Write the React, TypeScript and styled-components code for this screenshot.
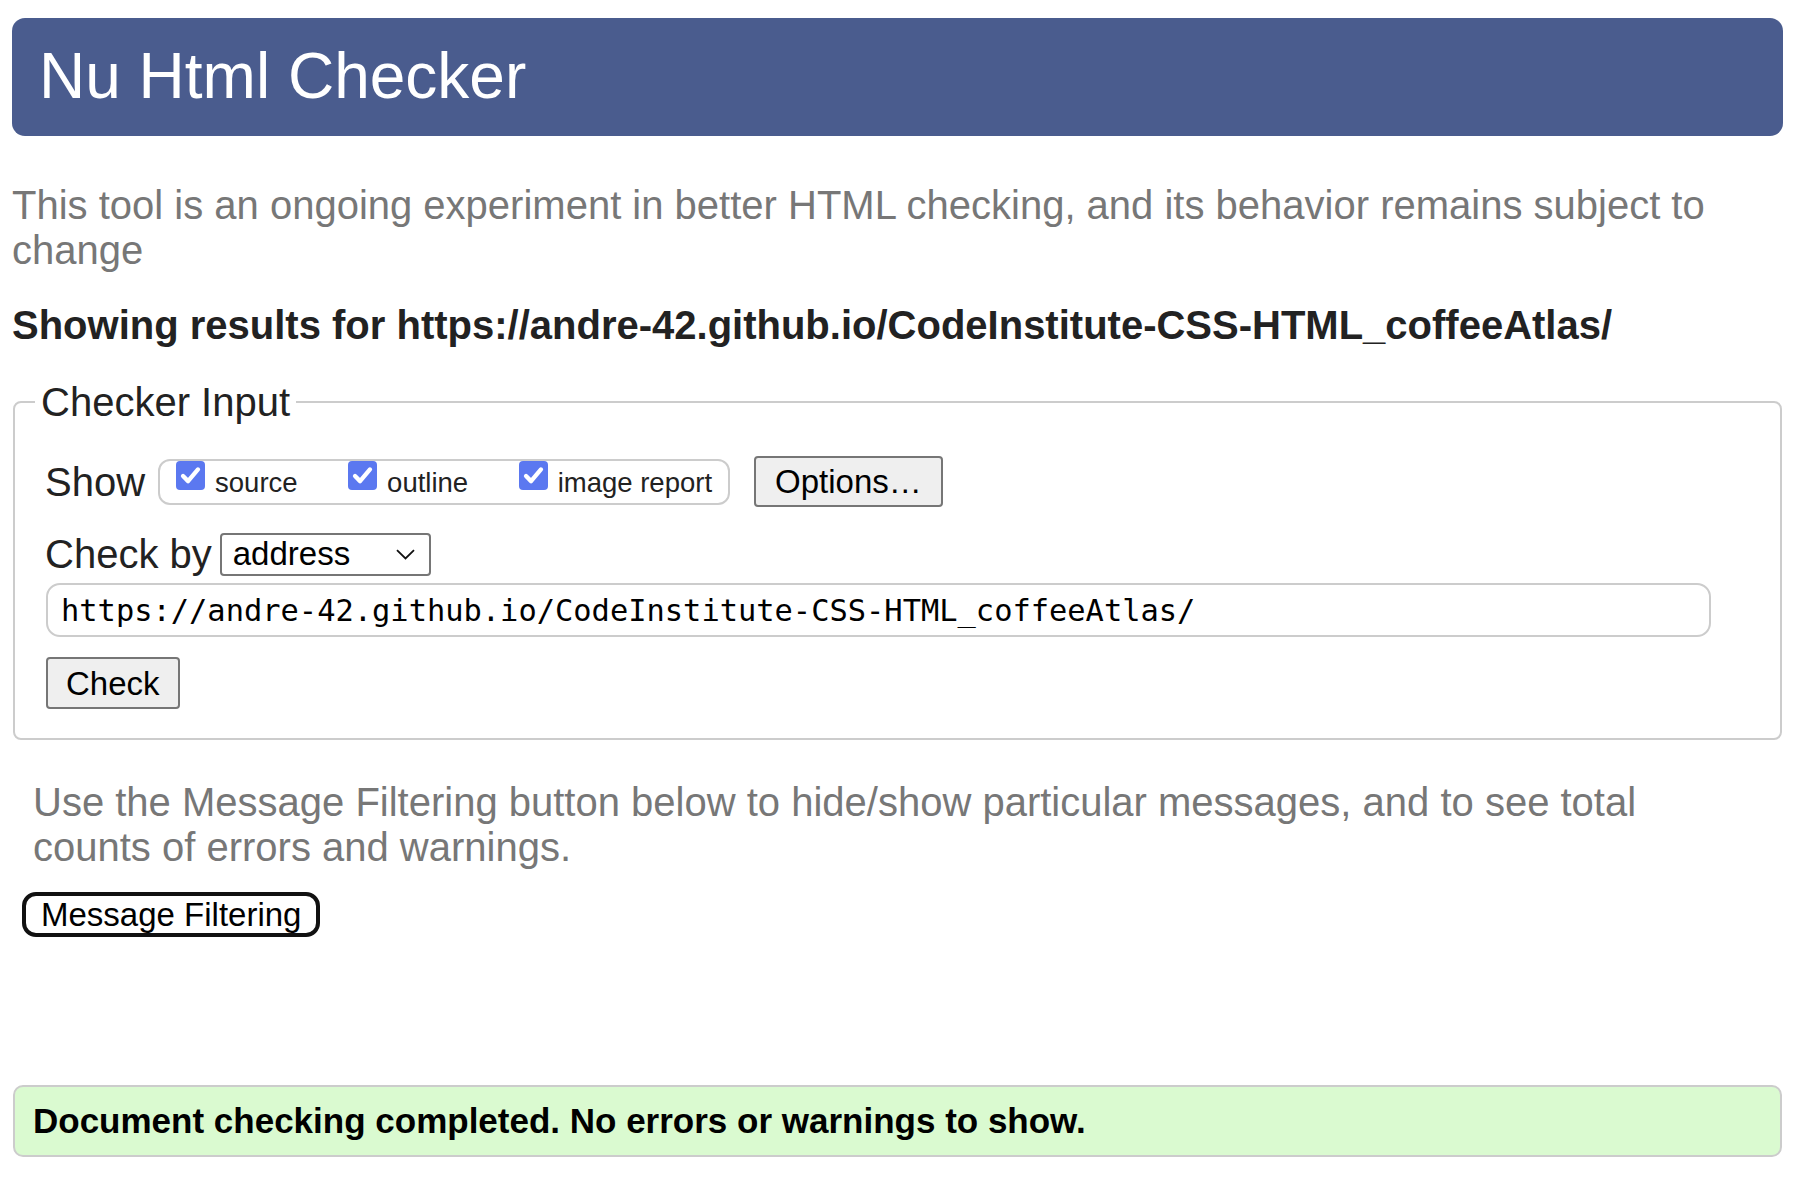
import React from "react";
import styled, { createGlobalStyle } from "styled-components";

const GlobalStyle = createGlobalStyle`
  html, body {
    margin: 0;
    padding: 0;
    background: #ffffff;
  }
  body {
    font-family: "Liberation Sans", Arial, sans-serif;
    color: #222222;
  }
  * { box-sizing: border-box; }
`;

const Page = styled.div`
  padding: 18px 13px 40px 12px;
`;

const Header = styled.header`
  height: 118px;
  background: #4a5c8e;
  border-radius: 13px;
  display: flex;
  align-items: center;
  padding-left: 27px;
`;

const Title = styled.h1`
  margin: 0;
  font-size: 64px;
  font-weight: 400;
  line-height: 1.15;
  color: #ffffff;
`;

const Intro = styled.p`
  margin: 47px 0 0;
  font-size: 40px;
  line-height: 45px;
  color: #777777;
`;

const Results = styled.h2`
  margin: 30px 0 0;
  font-size: 40px;
  line-height: 45px;
  font-weight: 700;
  color: #222222;
`;

const Fieldset = styled.fieldset`
  margin: 31px 1px 0;
  padding: 31px 30px 29px;
  border: 2px solid #cccccc;
  border-radius: 8px;
  min-width: 0;
`;

const Legend = styled.legend`
  margin-left: -10px;
  padding: 0 6px;
  font-size: 40px;
  line-height: 46px;
  color: #222222;
`;

const ShowRow = styled.div`
  display: flex;
  align-items: center;
  height: 51px;
`;

const CheckByRow = styled.div`
  display: flex;
  align-items: center;
  height: 46px;
  margin-top: 24px;
`;

const RowLabel = styled.span<{ $gap: number }>`
  font-size: 40px;
  line-height: 46px;
  color: #222222;
  margin-right: ${(p) => p.$gap}px;
  white-space: nowrap;
`;

const ToggleGroup = styled.div`
  display: flex;
  align-items: flex-start;
  gap: 50.5px;
  height: 46px;
  border: 2px solid #cccccc;
  border-radius: 12px;
  padding: 0 16px 0 16px;
`;

const Toggle = styled.label`
  display: flex;
  align-items: flex-start;
  gap: 10px;
`;

const CheckBox = styled.span`
  display: flex;
  align-items: center;
  justify-content: center;
  width: 29px;
  height: 29px;
  border-radius: 4px;
  background: #5b78f0;
`;

const ToggleText = styled.span`
  margin-top: 6px;
  font-size: 27.5px;
  line-height: 32px;
  color: #222222;
  white-space: nowrap;
`;

const GreyButton = styled.button`
  font-family: "Liberation Sans", Arial, sans-serif;
  font-size: 33px;
  color: #000000;
  background: #efefef;
  border: 2px solid #767676;
  border-radius: 4px;
  padding: 0 19px;
  line-height: 1;
  display: flex;
  align-items: center;
  justify-content: center;
`;

const OptionsButton = styled(GreyButton)`
  height: 51px;
  margin-left: 24px;
`;

const CheckButton = styled(GreyButton)`
  height: 52px;
  margin-top: 20px;
  margin-left: 1px;
  padding: 0 18px;
`;

const SelectBox = styled.div`
  display: flex;
  align-items: center;
  justify-content: space-between;
  width: 211px;
  height: 43px;
  border: 2px solid #767676;
  border-radius: 4px;
  padding: 0 14px 0 11px;
  font-size: 33px;
  color: #000000;
  background: #ffffff;
`;

const UrlField = styled.input`
  display: block;
  width: 1665px;
  height: 54px;
  margin: 6px 0 0 1px;
  padding: 0 13px;
  border: 2px solid #cccccc;
  border-radius: 14px;
  font-family: "DejaVu Sans Mono", "Liberation Mono", monospace;
  font-size: 30.4px;
  color: #000000;
  background: #ffffff;
  outline: none;
`;

const FilterNote = styled.p`
  margin: 40px 0 0;
  padding-left: 21px;
  max-width: 1720px;
  font-size: 40px;
  line-height: 45px;
  color: #777777;
`;

const FilterButton = styled.button`
  display: flex;
  align-items: center;
  height: 45px;
  margin: 22px 0 0 10px;
  padding: 0 15px;
  border: 4px solid #111111;
  border-radius: 14px;
  background: #ffffff;
  font-family: "Liberation Sans", Arial, sans-serif;
  font-size: 33px;
  color: #000000;
  line-height: 1;
`;

const SuccessBar = styled.div`
  display: flex;
  align-items: center;
  height: 72px;
  margin: 148px 1px 0;
  padding-left: 18px;
  background: #dafad0;
  border: 2px solid #cccccc;
  border-radius: 10px;
  font-size: 35px;
  font-weight: 700;
  color: #000000;
`;

const Check = () => (
  <svg width="23" height="23" viewBox="0 0 16 16" aria-hidden="true">
    <path
      d="M2.8 8.4 L6.3 11.9 L13.2 3.8"
      fill="none"
      stroke="#ffffff"
      strokeWidth="3"
      strokeLinecap="round"
      strokeLinejoin="round"
    />
  </svg>
);

const Chevron = () => (
  <svg width="19" height="11" viewBox="0 0 19 11" aria-hidden="true">
    <path d="M1 1.2 L9.5 9.5 L18 1.2" fill="none" stroke="#111111" strokeWidth="1.8" />
  </svg>
);

const toggles = ["source", "outline", "image report"];
const url = "https://andre-42.github.io/CodeInstitute-CSS-HTML_coffeeAtlas/";

export default function App() {
  return (
    <>
      <GlobalStyle />
      <Page>
        <Header>
          <Title>Nu Html Checker</Title>
        </Header>
        <Intro>
          This tool is an ongoing experiment in better HTML checking, and its behavior remains subject to change
        </Intro>
        <Results>Showing results for {url}</Results>
        <Fieldset>
          <Legend>Checker Input</Legend>
          <ShowRow>
            <RowLabel $gap={13}>Show</RowLabel>
            <ToggleGroup>
              {toggles.map((t) => (
                <Toggle key={t}>
                  <CheckBox>
                    <Check />
                  </CheckBox>
                  <ToggleText>{t}</ToggleText>
                </Toggle>
              ))}
            </ToggleGroup>
            <OptionsButton type="button">Options…</OptionsButton>
          </ShowRow>
          <CheckByRow>
            <RowLabel $gap={8}>Check by</RowLabel>
            <SelectBox>
              <span>address</span>
              <Chevron />
            </SelectBox>
          </CheckByRow>
          <UrlField type="text" value={url} readOnly />
          <CheckButton type="button">Check</CheckButton>
        </Fieldset>
        <FilterNote>
          Use the Message Filtering button below to hide/show particular messages, and to see total counts of errors and warnings.
        </FilterNote>
        <FilterButton type="button">Message Filtering</FilterButton>
        <SuccessBar>Document checking completed. No errors or warnings to show.</SuccessBar>
      </Page>
    </>
  );
}
